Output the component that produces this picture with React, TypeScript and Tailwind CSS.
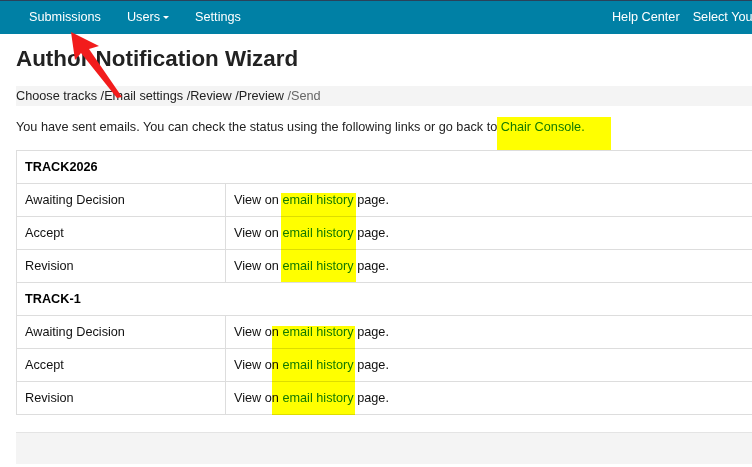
import React from "react";

const rows1 = ["Awaiting Decision", "Accept", "Revision"];

function Group({ name }: { name: string }) {
  return (
    <>
      <tr className="h-[33px]">
        <td colSpan={2} className="border border-[#dddddd] px-[8px] py-0 font-bold text-[#000]">
          {name}
        </td>
      </tr>
      {rows1.map((r) => (
        <tr key={name + r} className="h-[33px]">
          <td className="border border-[#dddddd] px-[8px] py-0 w-[209px]">{r}</td>
          <td className="border border-[#dddddd] px-[8px] py-0">
            View on <a className="text-[#137a13]">email history</a> page.
          </td>
        </tr>
      ))}
    </>
  );
}

export default function App() {
  return (
    <div
      className="relative w-[752px] h-[467px] overflow-hidden bg-white text-[#222] text-[12.7px] leading-[20px]"
      style={{ fontFamily: '"Liberation Sans", Arial, sans-serif' }}
    >
      {/* navbar */}
      <div className="w-[900px] h-[34px] border-t border-[#29425a] bg-[#0080a5] flex items-center text-white text-[12.7px] leading-[33px] whitespace-nowrap">
        <div className="flex pl-[16px]">
          <span className="px-[13px]">Submissions</span>
          <span className="px-[13px] flex items-center">
            Users
            <span className="ml-[3px] w-0 h-0 border-l-[3px] border-r-[3px] border-t-[3px] border-l-transparent border-r-transparent border-t-white"></span>
          </span>
          <span className="px-[13px]">Settings</span>
        </div>
        <div className="flex ml-[345px]">
          <span className="px-[13px]">Help Center</span>
          <span className="pr-[13px]">Select Your Role</span>
        </div>
      </div>

      <div className="pl-[16px]">
        <h1 className="mt-[12px] text-[22.4px] leading-[26px] font-bold text-[#222]">
          Author Notification Wizard
        </h1>
        <div className="mt-[14px] h-[20px] w-[800px] bg-[#f4f4f4] leading-[20px] text-[#222]">
          Choose tracks /Email settings /Review /Preview <span className="text-[#666]">/Send</span>
        </div>
        <p className="mt-[11px] leading-[20px] text-[#222]">
          You have sent emails. You can check the status using the following links or go back to{" "}
          <a className="text-[#137a13]">Chair Console.</a>
        </p>
        <table className="mt-[13px] w-[800px] border-collapse text-[#111]">
          <tbody>
            <Group name="TRACK2026" />
            <Group name="TRACK-1" />
          </tbody>
        </table>
        <div className="mt-[17px] h-[32px] w-[800px] bg-[#f4f4f4] border-t border-[#e4e4e4]"></div>
      </div>

      {/* highlight overlays */}
      <div className="absolute left-[497px] top-[117px] w-[114px] h-[33px] bg-[#ffff00] mix-blend-multiply"></div>
      <div className="absolute left-[281px] top-[193px] w-[75px] h-[89px] bg-[#ffff00] mix-blend-multiply"></div>
      <div className="absolute left-[272px] top-[326px] w-[83px] h-[89px] bg-[#ffff00] mix-blend-multiply"></div>

      {/* red arrow */}
      <svg className="absolute left-0 top-0" width="752" height="467" viewBox="0 0 752 467">
        <polygon
          points="71,32 99,46 89,49 122,97 117,98 81,53 75,60"
          fill="#f21c1c"
        />
      </svg>
    </div>
  );
}
